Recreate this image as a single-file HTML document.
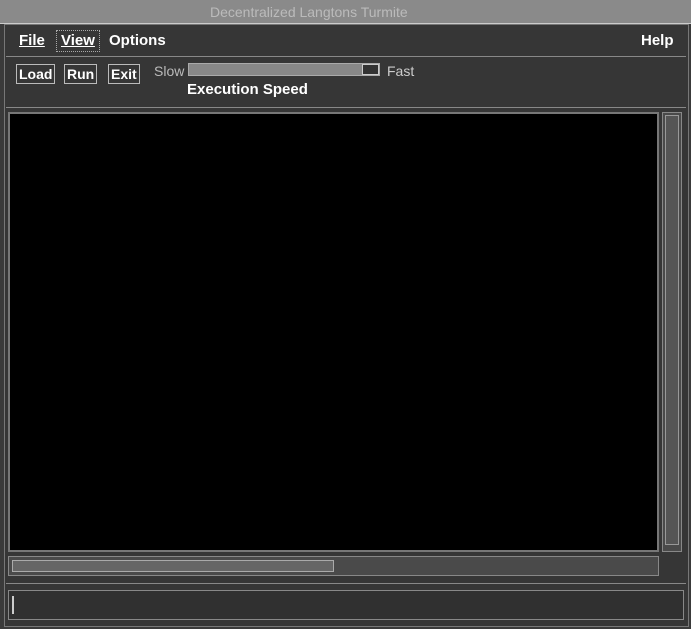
<!DOCTYPE html>
<html><head><style>
body{margin:0;width:691px;height:629px;background:#3a3a3a;position:relative;overflow:hidden;font-family:"Liberation Sans",sans-serif;font-weight:bold;color:#fff}
div{position:absolute;box-sizing:border-box}
.t{font-size:15px}
.btn{border:1px solid #bbb;padding:1px 2px;font-size:14px}
</style></head><body>
<div style="left:0;top:0;width:691px;height:24px;background:#8a8a8a;border-bottom:1px solid #ccc"></div>
<div style="left:210px;top:4px;font-size:14px;color:#bbb;font-weight:normal">Decentralized Langtons Turmite</div>
<div style="left:4px;top:24px;width:685px;height:603px;border:1px solid #777;background:#363636"></div>
<div class="t" style="left:19px;top:32px;text-decoration:underline">File</div>
<div style="left:56px;top:30px;width:44px;height:22px;border:1px dotted #aaa"></div>
<div class="t" style="left:61px;top:32px;text-decoration:underline">View</div>
<div class="t" style="left:109px;top:32px">Options</div>
<div class="t" style="left:641px;top:32px">Help</div>
<div style="left:6px;top:56px;width:680px;height:1px;background:#888"></div>
<div class="btn" style="left:16px;top:64px">Load</div>
<div class="btn" style="left:64px;top:64px">Run</div>
<div class="btn" style="left:108px;top:64px">Exit</div>
<div style="left:154px;top:63px;font-size:14px;font-weight:normal;color:#bbb">Slow</div>
<div style="left:188px;top:63px;width:192px;height:13px;background:#888;border:1px solid #aaa"></div>
<div style="left:362px;top:64px;width:17px;height:11px;background:#333;border:1px solid #ccc"></div>
<div style="left:387px;top:63px;font-size:14px;font-weight:normal;color:#ccc">Fast</div>
<div class="t" style="left:187px;top:81px">Execution Speed</div>
<div style="left:6px;top:107px;width:680px;height:1px;background:#888"></div>
<div style="left:8px;top:112px;width:651px;height:440px;border:2px solid #777;background:#000"></div>
<div style="left:12px;top:116px;width:643px;height:432px;background:#000"></div>
<div style="left:662px;top:112px;width:20px;height:440px;background:#4a4a4a;border:1px solid #888"></div>
<div style="left:665px;top:115px;width:14px;height:430px;background:#555;border:1px solid #999"></div>
<div style="left:8px;top:556px;width:651px;height:20px;background:#4a4a4a;border:1px solid #888"></div>
<div style="left:12px;top:560px;width:322px;height:12px;background:#666;border:1px solid #aaa"></div>
<div style="left:6px;top:583px;width:680px;height:1px;background:#888"></div>
<div style="left:8px;top:590px;width:676px;height:30px;border:1px solid #888;background:#303030"></div>
<div style="left:12px;top:596px;width:2px;height:18px;background:#ccc"></div>
</body></html>
